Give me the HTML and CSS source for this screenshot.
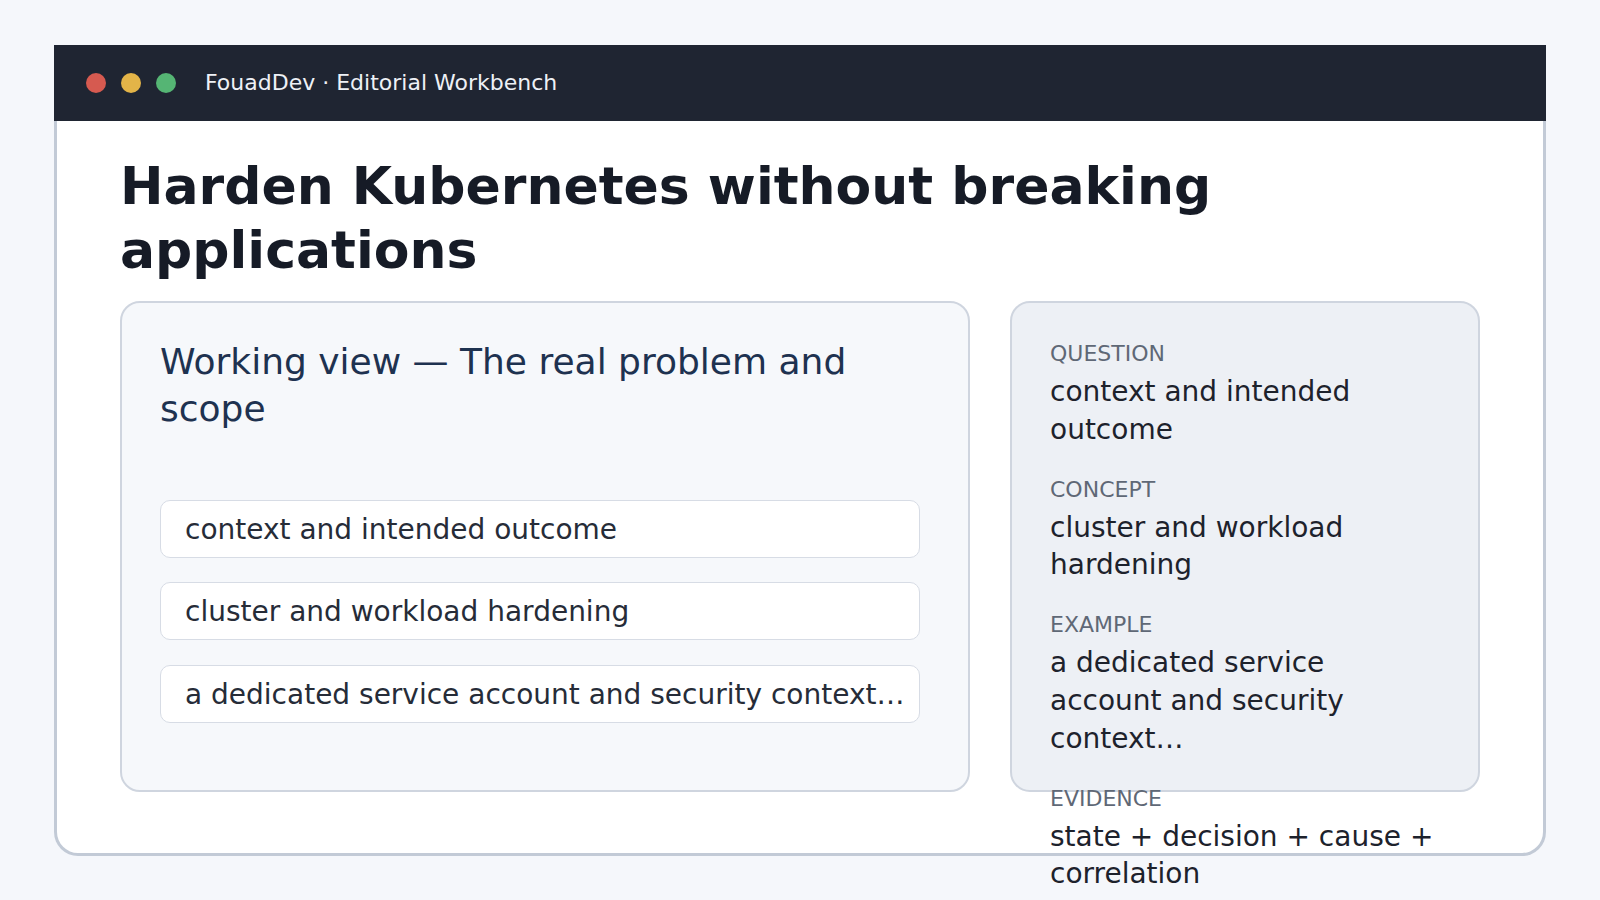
FILE: index.html
```html
<!DOCTYPE html>
<html lang="en">
<head>
<meta charset="utf-8">
<title>FouadDev · Editorial Workbench</title>
<link rel="stylesheet" href="styles.css">
</head>
<body>
  <div class="window">
    <header class="titlebar">
      <div class="dots">
        <span class="dot dot-red"></span>
        <span class="dot dot-yellow"></span>
        <span class="dot dot-green"></span>
      </div>
      <div class="app-title">FouadDev · Editorial Workbench</div>
    </header>
    <main class="body">
      <h1 class="title">Harden Kubernetes without breaking applications</h1>
      <div class="grid">
        <section class="card">
          <h2 class="card-heading">Working view — The real problem and scope</h2>
          <ul class="steps">
            <li class="step">context and intended outcome</li>
            <li class="step">cluster and workload hardening</li>
            <li class="step">a dedicated service account and security context…</li>
          </ul>
        </section>
        <aside class="panel">
          <div class="group">
            <div class="label">QUESTION</div>
            <div class="value">context and intended outcome</div>
          </div>
          <div class="group">
            <div class="label">CONCEPT</div>
            <div class="value">cluster and workload hardening</div>
          </div>
          <div class="group">
            <div class="label">EXAMPLE</div>
            <div class="value">a dedicated service account and security context…</div>
          </div>
          <div class="group">
            <div class="label">EVIDENCE</div>
            <div class="value">state + decision + cause + correlation</div>
          </div>
        </aside>
      </div>
    </main>
  </div>
</body>
</html>
```

FILE: styles.css
```css
* {
  box-sizing: border-box;
}

html, body {
  margin: 0;
  height: 100%;
}

body {
  background: #f5f7fb;
  font-family: "DejaVu Sans", "Liberation Sans", sans-serif;
  padding: 45px 54px 44px;
  display: flex;
  flex-direction: column;
}

.window {
  flex: 1;
  display: flex;
  flex-direction: column;
  min-height: 0;
}

.titlebar {
  height: 76px;
  flex-shrink: 0;
  background: #1f2532;
  display: flex;
  align-items: center;
  gap: 29px;
  padding: 0 32px;
}

.dots {
  display: flex;
  gap: 15px;
}

.dot {
  width: 20px;
  height: 20px;
  border-radius: 50%;
  display: block;
}

.dot-red { background: #d65a50; }
.dot-yellow { background: #e3b448; }
.dot-green { background: #55b574; }

.app-title {
  color: #eef1f6;
  font-size: 22px;
  line-height: 1;
}

.body {
  flex: 1;
  min-height: 0;
  display: flex;
  flex-direction: column;
  background: #ffffff;
  border: 3px solid #c2cad6;
  border-top: none;
  border-radius: 0 0 24px 24px;
  padding: 33px 63px 61px;
}

.title {
  margin: 0 0 19px;
  font-size: 52px;
  line-height: 64px;
  font-weight: 700;
  color: #161b26;
}

.grid {
  flex: 1;
  min-height: 0;
  display: grid;
  grid-template-columns: minmax(0, 850fr) minmax(0, 470fr);
  gap: 40px;
}

.card {
  background: #f6f8fb;
  border: 2px solid #cfd5df;
  border-radius: 20px;
  padding: 36px 48px 36px 38px;
  min-height: 0;
}

.card-heading {
  margin: 0;
  font-size: 36px;
  line-height: 1.3;
  font-weight: 400;
  color: #1e3250;
}

.steps {
  list-style: none;
  margin: 67px 0 0;
  padding: 0;
  display: flex;
  flex-direction: column;
  gap: 24.5px;
}

.step {
  background: #ffffff;
  border: 1px solid #d7dce5;
  border-radius: 10px;
  padding: 11px 10px 9px 24px;
  font-size: 28px;
  line-height: 36px;
  color: #262c38;
  white-space: nowrap;
  overflow: hidden;
}

.panel {
  background: #edf0f5;
  border: 2px solid #cfd5df;
  border-radius: 20px;
  padding: 36px 40px 36px 38px;
  min-height: 0;
}

.group {
  margin-bottom: 26px;
}

.label {
  font-size: 22px;
  line-height: 30px;
  color: #5f6876;
  margin-bottom: 4px;
}

.value {
  font-size: 28px;
  line-height: 1.35;
  color: #1d222c;
}
```
